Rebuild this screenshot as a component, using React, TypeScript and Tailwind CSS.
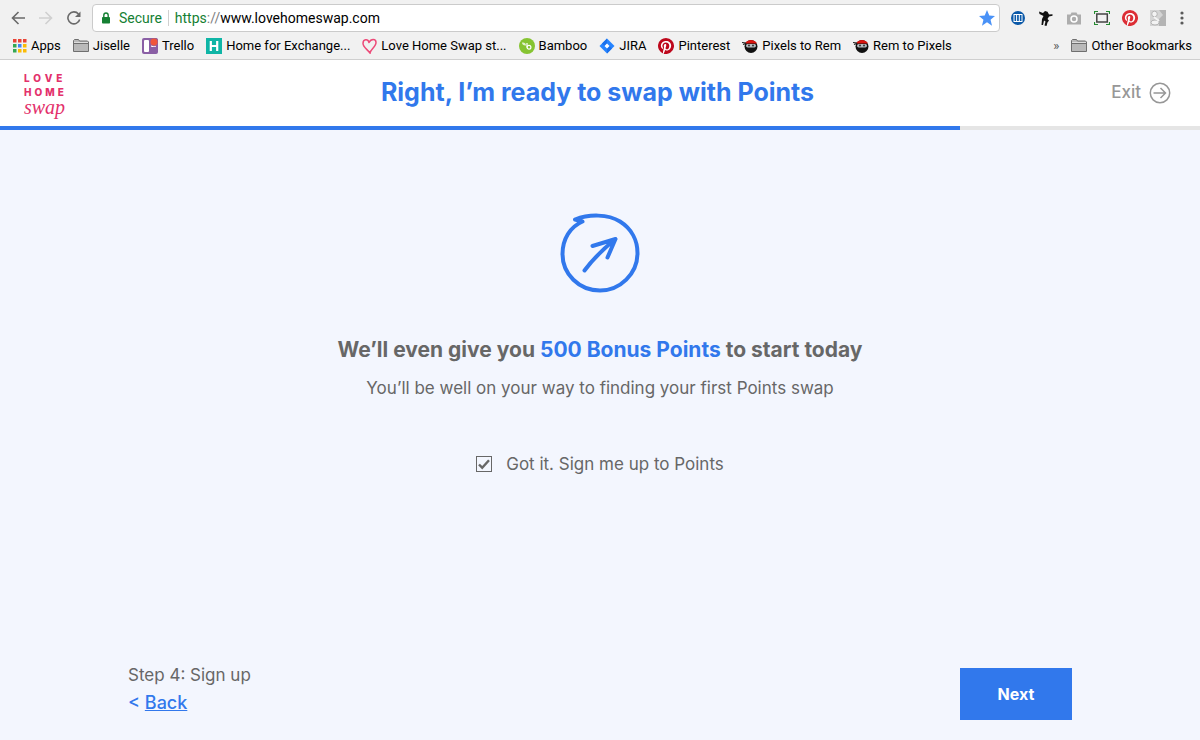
import { useState, type ReactNode } from "react";

function Folder() {
  return (
    <svg width="16" height="14" viewBox="0 0 16 14" aria-hidden="true">
      <path d="M.5 12.500v-11l1-1h4l1 1.500h8l1 1v9.500z" fill="#b9b9b9" stroke="#6f6f6f" />
      <path d="M1 4.500h14" stroke="#6f6f6f" />
      <path d="M1 3.500h14" stroke="#dedede" />
    </svg>
  );
}

function AppsGrid() {
  const colors = ["#ea4335", "#ea4335", "#ea4335", "#34a853", "#4285f4", "#fbbc05", "#34a853", "#fbbc05", "#fbbc05"];
  return (
    <svg width="15" height="14" viewBox="0 0 15 14" aria-hidden="true">
      {colors.map((c, i) => (
        <rect key={i} x={(i % 3) * 5 + 1} y={Math.floor(i / 3) * 5} width="3.500" height="3.500" fill={c} />
      ))}
    </svg>
  );
}

function TrelloMark() {
  return (
    <svg width="16" height="16" viewBox="0 0 16 16" aria-hidden="true">
      <rect width="16" height="16" rx="2" fill="#8a5fa5" />
      <rect x="2" y="2" width="5" height="12" rx="1" fill="#fff" />
      <rect x="9" y="2" width="5" height="7" rx="1" fill="#fff" />
      <circle cx="12" cy="4" r="4" fill="#f0563a" stroke="#8a5fa5" strokeWidth=".7" />
    </svg>
  );
}

function ExchangeMark() {
  return (
    <svg width="16" height="16" viewBox="0 0 16 16" aria-hidden="true">
      <rect width="16" height="16" fill="#0fb5a6" />
      <path d="M4.800 3v10M11.200 3v10M4.800 8h6.400" stroke="#fff" strokeWidth="2.200" />
    </svg>
  );
}

function HeartMark() {
  return (
    <svg width="15" height="16" viewBox="0 0 15 16" fill="none" aria-hidden="true">
      <path d="M7 4.500C6 .5 1 1 1 5.500 1 9 5 11 8 15c0-3 6-6 6-10.500C14 .5 9 .5 7 4.500" stroke="#ed4a78" strokeWidth="1.500" strokeLinecap="round" />
    </svg>
  );
}

function BambooMark() {
  return (
    <svg width="16" height="16" viewBox="0 0 16 16" fill="none" aria-hidden="true">
      <circle cx="8" cy="8" r="8" fill="#86c432" />
      <path d="M8 5v4.500" stroke="#fff" strokeWidth="1.200" />
      <circle cx="10" cy="9.300" r="1.900" stroke="#fff" strokeWidth="1.200" />
      <path d="M3 4.500c2-.5 4 .5 4 3-2 .5-4-1-4-3z" fill="#e2f2cf" />
    </svg>
  );
}

function JiraMark() {
  return (
    <svg width="16" height="16" viewBox="0 0 16 16" aria-hidden="true">
      <path d="M8 .5L15.500 8 8 15.500.5 8z" fill="#2684ff" />
      <path d="M8 .5v5L5.500 8 3 5.500zM8 15.500v-5L10.500 8 13 10.500z" fill="#1a70ec" />
      <path d="M8 5.500L10.500 8 8 10.500 5.500 8z" fill="#fff" />
    </svg>
  );
}

function PinterestMark({ color }: { color: string }) {
  return (
    <svg width="16" height="16" viewBox="0 0 24 24" aria-hidden="true">
      <circle cx="12" cy="12" r="11.500" fill="#fff" />
      <path
        fill={color}
        d="M12 0a12 12 0 0 0-4.370 23.170c-.1-.95-.2-2.400.04-3.440l1.400-5.960s-.35-.72-.35-1.780c0-1.670.97-2.910 2.170-2.910 1.020 0 1.520.77 1.520 1.690 0 1.030-.66 2.570-1 4-.28 1.200.6 2.170 1.780 2.170 2.130 0 3.770-2.250 3.770-5.490 0-2.870-2.060-4.870-5-4.870-3.410 0-5.410 2.560-5.410 5.200 0 1.030.4 2.130.89 2.730.1.120.11.220.08.340l-.33 1.360c-.5.220-.17.270-.4.160-1.500-.7-2.430-2.890-2.430-4.650 0-3.790 2.750-7.260 7.930-7.260 4.160 0 7.400 2.970 7.400 6.930 0 4.140-2.610 7.460-6.230 7.460-1.220 0-2.360-.63-2.750-1.380l-.75 2.850c-.27 1.040-1 2.350-1.490 3.150A12 12 0 1 0 12 0z"
      />
    </svg>
  );
}

function NinjaMark() {
  return (
    <svg width="16" height="16" viewBox="0 0 16 16" aria-hidden="true">
      <circle cx="9" cy="8.500" r="6.500" fill="#111" />
      <path d="M3.500 4.500c3-3.500 8-3.500 11 0v1h-11z" fill="#d9150f" />
      <path d="M0 4.500l4 .5M1 6.500l3-1" stroke="#222" strokeWidth="1.200" fill="none" />
      <rect x="4" y="6" width="10" height="3.500" rx="1.700" fill="#b4bbbf" />
      <circle cx="7" cy="7.500" r="1" fill="#333" />
      <circle cx="11" cy="7.500" r="1" fill="#333" />
    </svg>
  );
}

function Bookmark({ icon, children }: { icon: ReactNode; children: ReactNode }) {
  return (
    <a href="#" className="flex shrink-0 items-center gap-1 whitespace-nowrap">
      {icon}
      <span>{children}</span>
    </a>
  );
}

function Toolbar() {
  return (
    <div className="flex h-9 items-center pr-2.5 pl-[11px]">
      <div className="flex gap-3.5">
        <button aria-label="Go back">
          <svg width="14" height="14" viewBox="0 0 14 14" fill="none" stroke="#6a6a6a" strokeWidth="1.600" aria-hidden="true">
            <path d="M14 7H1.500M7.500 1L1.500 7l6 6" />
          </svg>
        </button>
        <button aria-label="Go forward">
          <svg width="14" height="14" viewBox="0 0 14 14" fill="none" stroke="#d0d0d0" strokeWidth="1.600" aria-hidden="true">
            <path d="M0 7h12.500M6.500 1l6 6-6 6" />
          </svg>
        </button>
        <button aria-label="Reload">
          <svg width="14" height="14" viewBox="0 0 14 14" aria-hidden="true">
            <path d="M12.700 8.500A6 6 0 1 1 11.500 3" fill="none" stroke="#6a6a6a" strokeWidth="1.600" />
            <path d="M13.500 .5v5.500H8z" fill="#6a6a6a" />
          </svg>
        </button>
      </div>
      <div className="ml-[11px] flex h-7 min-w-0 flex-1 items-center rounded-sm border border-[#cbcbcb] bg-white px-2 text-sm">
        <svg width="10" height="12" viewBox="0 0 10 12" aria-hidden="true">
          <rect x="1" y="5" width="8" height="6.500" rx=".8" fill="#158033" />
          <path d="M2.800 5V3.200a2.200 2.200 0 0 1 4.400 0V5" fill="none" stroke="#158033" strokeWidth="1.400" />
        </svg>
        <span className="ml-2 text-[#158033]">Secure</span>
        <span className="mx-1.5 h-4 w-px bg-[#d0d0d0]" />
        <label htmlFor="address" className="text-[#808080]">
          <span className="text-[#158033]">https</span>://
        </label>
        <input
          id="address"
          className="min-w-0 flex-1 bg-transparent text-black outline-none"
          defaultValue="www.lovehomeswap.com"
        />
        <button aria-label="Edit bookmark" className="-mr-1">
          <svg width="16" height="16" viewBox="0 0 14 14" aria-hidden="true">
            <path d="M7 0l2 4.900 5 .3-3.900 3.300 1.300 5.200L7 10.800l-4.400 2.900 1.300-5.200L0 5.200l5-.3z" fill="#4a92f7" />
          </svg>
        </button>
      </div>
      <div className="ml-2.5 flex items-center gap-3">
        <button aria-label="Library">
          <svg width="16" height="16" viewBox="0 0 16 16" aria-hidden="true">
            <circle cx="8" cy="8" r="7" fill="#0b59a8" />
            <path d="M3.500 4.500h9M3.500 11.500h9M4 5v6M6.600 5v6M9.300 5v6M12 5v6" stroke="#fff" strokeWidth="1" />
          </svg>
        </button>
        <button aria-label="Figure">
          <svg width="16" height="16" viewBox="0 0 16 16" aria-hidden="true">
            <path d="M1 1.500L5 3l2-2 2.500.8L11 4.500l3.500-.2v1.500L11 6.500 9.500 9l1.500 1.500-1.500 2L8.500 16 6.500 15.500l1-4-1.500-1L5 15H3.500L4 9l1.500-3L1.500 4z" fill="#111" />
          </svg>
        </button>
        <button aria-label="Capture">
          <svg width="16" height="16" viewBox="0 0 16 16" aria-hidden="true">
            <path d="M1 4.500h3.500l1-2h5l1 2H15v10H1z" fill="#adadad" />
            <circle cx="8" cy="9" r="3" fill="#adadad" stroke="#fff" strokeWidth="1.500" />
          </svg>
        </button>
        <button aria-label="Resize window">
          <svg width="16" height="16" viewBox="0 0 16 16" fill="none" aria-hidden="true">
            <rect x="2.800" y="4" width="10.500" height="8" stroke="#444" strokeWidth="1.500" />
            <path d="M.5 4V1.500H4M12 1.500h3.500V4M.5 12v2.500H4M12 14.500h3.500V12" stroke="#248b31" strokeWidth="1.200" />
          </svg>
        </button>
        <button aria-label="Save pin"><PinterestMark color="#dc2e35" /></button>
        <button aria-label="Search tool">
          <svg width="16" height="16" viewBox="0 0 16 16" aria-hidden="true">
            <rect width="16" height="16" fill="#d4d4d4" />
            <path d="M9 0h7v16H9V9l4-4z" fill="#b4b4b4" />
            <circle cx="4.500" cy="4" r="2.800" fill="#f3f3f3" stroke="#b5b5b5" />
            <ellipse cx="5" cy="12.500" rx="4" ry="2.500" fill="#f3f3f3" stroke="#b5b5b5" />
            <path d="M4 7l5 4" stroke="#f3f3f3" strokeWidth="2" />
          </svg>
        </button>
        <button aria-label="Menu" className="-ml-1">
          <svg width="16" height="16" viewBox="0 0 16 16" fill="#5a5a5a" aria-hidden="true">
            <circle cx="8" cy="3" r="1.600" /><circle cx="8" cy="8" r="1.600" /><circle cx="8" cy="13" r="1.600" />
          </svg>
        </button>
      </div>
    </div>
  );
}

function BrowserChrome() {
  return (
    <div className="h-15 border-b border-[#cfcfcf] bg-[#f1f1f1] font-['Roboto',sans-serif] text-black">
      <Toolbar />
      <nav aria-label="Bookmarks" className="flex h-5 items-center gap-3 pr-2 pl-3 text-[13px]">
        <Bookmark icon={<AppsGrid />}>Apps</Bookmark>
        <Bookmark icon={<Folder />}>Jiselle</Bookmark>
        <Bookmark icon={<TrelloMark />}>Trello</Bookmark>
        <Bookmark icon={<ExchangeMark />}>Home for Exchange...</Bookmark>
        <Bookmark icon={<HeartMark />}>Love Home Swap st...</Bookmark>
        <Bookmark icon={<BambooMark />}>Bamboo</Bookmark>
        <Bookmark icon={<JiraMark />}>JIRA</Bookmark>
        <Bookmark icon={<PinterestMark color="#bd081c" />}>Pinterest</Bookmark>
        <Bookmark icon={<NinjaMark />}>Pixels to Rem</Bookmark>
        <Bookmark icon={<NinjaMark />}>Rem to Pixels</Bookmark>
        <button aria-label="More bookmarks" className="ml-auto text-[#555]">»</button>
        <Bookmark icon={<Folder />}>Other Bookmarks</Bookmark>
      </nav>
    </div>
  );
}

function Logo() {
  return (
    <a href="#" aria-label="Love Home Swap" className="flex flex-col text-[#e3316c]">
      <span className="text-[10px] leading-[14px] font-extrabold tracking-[4px]">LOVE</span>
      <span className="text-[10px] leading-[14px] font-extrabold tracking-[3px]">HOME</span>
      <span className="font-['Liberation_Serif',serif] text-xl leading-4 italic">swap</span>
    </a>
  );
}

export default function App() {
  const [agreed, setAgreed] = useState(true);
  return (
    <div className="flex min-h-screen flex-col bg-[#f3f6fe] font-['Inter',sans-serif] text-[#676767]">
      <BrowserChrome />
      <header className="bg-white">
        <div className="grid h-[66px] grid-cols-[1fr_auto_1fr] items-center pr-[29px] pl-6">
          <Logo />
          <h1 className="text-[25px] font-bold text-[#3178ec]">Right, I’m ready to swap with Points</h1>
          <a href="#" className="flex items-center gap-2 justify-self-end text-[17px] font-medium text-[#979797]">
            Exit
            <svg width="22" height="22" viewBox="0 0 22 22" fill="none" stroke="currentColor" strokeWidth="1.500" aria-hidden="true">
              <circle cx="11" cy="11" r="9.700" />
              <path d="M4.500 11h12M11.500 6l5 5-5 5" />
            </svg>
          </a>
        </div>
        <div role="progressbar" aria-label="Sign up progress" aria-valuenow={80} className="h-1 bg-[#e5e5e5]">
          <div className="h-full w-4/5 bg-[#3178ec]" />
        </div>
      </header>
      <main className="flex flex-1 flex-col items-center pt-[83px] text-center text-[17px]">
        <svg width="80" height="80" viewBox="0 0 80 80" fill="none" stroke="#3178ec" strokeWidth="4" strokeLinecap="round" strokeLinejoin="round" aria-hidden="true">
          <path d="M15 6.500C29 1 48 1 60 8.500 72 16 77.500 28 77.500 40 77.500 61 60 77.500 40 77.500 19 77.500 2.500 61 2.500 41 2.500 26 10 14 22.500 8.500L15 6.500" />
          <path d="M24.500 57.500C33 46 42 37 55.500 26M32.500 33L55.500 26 47.500 44.500" />
        </svg>
        <h2 className="mt-[43px] text-[21px] leading-7 font-bold">
          We’ll even give you <span className="text-[#3178ec]">500 Bonus Points</span> to start today
        </h2>
        <p className="mt-3 leading-6">You’ll be well on your way to finding your first Points swap</p>
        <label className="mt-13 flex items-center gap-3.5 leading-6">
          <span className="relative flex size-4">
            <input
              type="checkbox"
              checked={agreed}
              onChange={(e) => setAgreed(e.target.checked)}
              className="peer size-4 appearance-none border border-[#676767]"
            />
            <svg className="pointer-events-none absolute inset-0 hidden peer-checked:block" width="16" height="16" viewBox="0 0 16 16" fill="none" aria-hidden="true">
              <path d="M3 8.500l3.200 3.200L13 4.200" stroke="#676767" strokeWidth="2.400" />
            </svg>
          </span>
          Got it. Sign me up to Points
        </label>
      </main>
      <footer className="flex items-end justify-between px-32 pb-5">
        <div className="pb-[3px]">
          <p className="text-[17px] leading-6">Step 4: Sign up</p>
          <p className="mt-0.5 text-lg leading-7 font-medium text-[#3178ec]">
            &lt; <a href="#" className="underline">Back</a>
          </p>
        </div>
        <button className="h-13 w-28 bg-[#3178ec] font-bold text-white">Next</button>
      </footer>
    </div>
  );
}
